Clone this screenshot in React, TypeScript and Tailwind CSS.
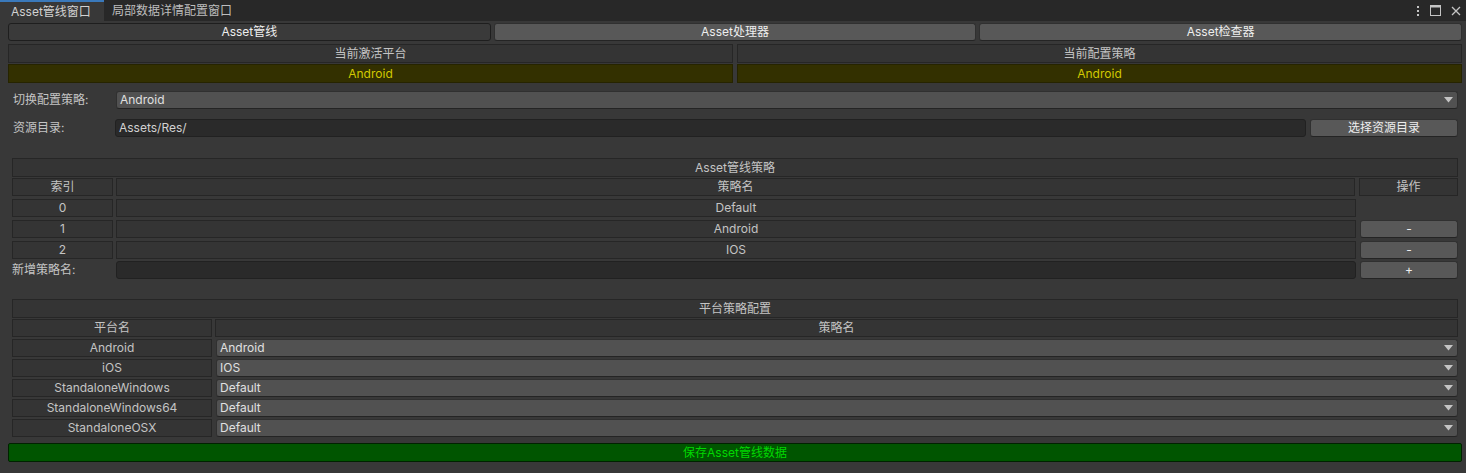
import React from "react";

const FONT = { fontFamily: "Inter, 'Noto Sans CJK SC', sans-serif" };

function Cell({ children, className = "" }: { children?: React.ReactNode; className?: string }) {
  return (
    <div
      className={`flex items-center justify-center h-[18px] bg-[#343434] border border-[#262626] text-[12px] text-[#c4c4c4] ${className}`}
    >
      {children}
    </div>
  );
}

function Button({ children, className = "" }: { children?: React.ReactNode; className?: string }) {
  return (
    <div
      className={`flex items-center justify-center h-[18px] bg-[#585858] border border-[#303030] border-b-[#242424] rounded-[3px] text-[12px] text-[#eeeeee] ${className}`}
    >
      {children}
    </div>
  );
}

function Dropdown({ value, className = "" }: { value: string; className?: string }) {
  return (
    <div
      className={`flex items-center h-[18px] bg-[#515151] border border-[#303030] border-b-[#242424] rounded-[3px] pl-[3px] pr-[4px] text-[12px] text-[#e0e0e0] ${className}`}
    >
      <span className="flex-1">{value}</span>
      <svg width="9" height="6" viewBox="0 0 9 6">
        <path d="M0 0 H9 L4.5 5.5 Z" fill="#c4c4c4" />
      </svg>
    </div>
  );
}

function TextField({ value = "", className = "" }: { value?: string; className?: string }) {
  return (
    <div
      className={`flex items-center h-[18px] bg-[#2a2a2a] border border-[#212121] rounded-[3px] pl-[3px] text-[12px] text-[#d2d2d2] ${className}`}
    >
      {value}
    </div>
  );
}

const strategies = [
  { idx: "0", name: "Default", removable: false },
  { idx: "1", name: "Android", removable: true },
  { idx: "2", name: "IOS", removable: true },
];

const platforms = [
  { name: "Android", strategy: "Android" },
  { name: "iOS", strategy: "IOS" },
  { name: "StandaloneWindows", strategy: "Default" },
  { name: "StandaloneWindows64", strategy: "Default" },
  { name: "StandaloneOSX", strategy: "Default" },
];

export default function App() {
  return (
    <div className="w-[1466px] h-[473px] bg-[#383838] flex flex-col overflow-hidden" style={FONT}>
      {/* Tab bar */}
      <div className="h-[21px] bg-[#282828] flex items-stretch shrink-0">
        <div className="w-[104px] bg-[#383838] border-t-2 border-[#3a79bb] flex items-center pl-[11px] text-[12px] text-[#d2d2d2]">
          Asset管线窗口
        </div>
        <div className="flex items-center pl-[8px] text-[12px] text-[#bdbdbd]">局部数据详情配置窗口</div>
        <div className="flex-1" />
        <div className="flex items-center gap-[10px] pr-[5px]">
          <svg width="4" height="12" viewBox="0 0 4 12">
            <rect x="1" y="1" width="2" height="2" fill="#c4c4c4" />
            <rect x="1" y="5" width="2" height="2" fill="#c4c4c4" />
            <rect x="1" y="9" width="2" height="2" fill="#c4c4c4" />
          </svg>
          <svg width="11" height="11" viewBox="0 0 11 11">
            <rect x="0.5" y="0.5" width="10" height="10" fill="none" stroke="#c4c4c4" />
            <rect x="0.5" y="0.5" width="10" height="2" fill="#c4c4c4" />
          </svg>
          <svg width="10" height="10" viewBox="0 0 10 10">
            <path d="M1 1 L9 9 M9 1 L1 9" stroke="#c4c4c4" strokeWidth="1.3" />
          </svg>
        </div>
      </div>

      {/* Toolbar */}
      <div className="flex gap-[3px] pl-[8px] pr-[4px] mt-[2px]">
        <div className="flex-1 flex items-center justify-center h-[18px] bg-[#3a3a3a] border border-[#1e1e1e] rounded-[3px] text-[12px] text-[#eeeeee]">
          Asset管线
        </div>
        <Button className="flex-1">Asset处理器</Button>
        <Button className="flex-1">Asset检查器</Button>
      </div>

      {/* Active platform / strategy */}
      <div className="flex gap-[4px] pl-[8px] pr-[4px] mt-[3px]">
        <Cell className="flex-1 h-[19px]">当前激活平台</Cell>
        <Cell className="flex-1 h-[19px]">当前配置策略</Cell>
      </div>
      <div className="flex gap-[4px] pl-[8px] pr-[4px] mt-[1px]">
        <div className="flex-1 flex items-center justify-center h-[19px] bg-[#333000] border border-[#262400] text-[12px] text-[#d2c800]">
          Android
        </div>
        <div className="flex-1 flex items-center justify-center h-[19px] bg-[#333000] border border-[#262400] text-[12px] text-[#d2c800]">
          Android
        </div>
      </div>

      {/* Switch strategy */}
      <div className="flex items-center pl-[13px] pr-[8px] mt-[8px]">
        <div className="w-[103px] text-[12px] text-[#c4c4c4]">切换配置策略:</div>
        <Dropdown value="Android" className="flex-1" />
      </div>

      {/* Resource dir */}
      <div className="flex items-center pl-[13px] pr-[8px] mt-[10px]">
        <div className="w-[102px] text-[12px] text-[#c4c4c4]">资源目录:</div>
        <TextField value="Assets/Res/" className="flex-1" />
        <Button className="w-[148px] ml-[4px]">选择资源目录</Button>
      </div>

      {/* Strategy table */}
      <div className="flex flex-col pl-[12px] pr-[8px] mt-[21px]">
        <Cell className="h-[19px]">Asset管线策略</Cell>
        <div className="flex gap-[3px] mt-[1px]">
          <Cell className="w-[101px]">索引</Cell>
          <Cell className="flex-1">策略名</Cell>
          <Cell className="w-[99px] ml-[1px]">操作</Cell>
        </div>
        {strategies.map((s) => (
          <div key={s.idx} className="flex gap-[3px] mt-[2px] h-[19px] items-center">
            <Cell className="w-[101px]">{s.idx}</Cell>
            <Cell className="flex-1">{s.name}</Cell>
            {s.removable ? (
              <Button className="w-[98px] ml-[1px]">-</Button>
            ) : (
              <div className="w-[98px] ml-[1px]" />
            )}
          </div>
        ))}
        <div className="flex items-center mt-[2px]">
          <div className="w-[104px] text-[12px] text-[#c4c4c4]">新增策略名:</div>
          <TextField className="flex-1" />
          <Button className="w-[98px] ml-[4px]">+</Button>
        </div>
      </div>

      {/* Platform table */}
      <div className="flex flex-col pl-[12px] pr-[8px] mt-[20px]">
        <Cell className="h-[19px]">平台策略配置</Cell>
        <div className="flex gap-[3px] mt-[1px]">
          <Cell className="w-[200px]">平台名</Cell>
          <Cell className="flex-1">策略名</Cell>
        </div>
        {platforms.map((p) => (
          <div key={p.name} className="flex gap-[4px] mt-[2px]">
            <Cell className="w-[200px]">{p.name}</Cell>
            <Dropdown value={p.strategy} className="flex-1" />
          </div>
        ))}
      </div>

      {/* Save */}
      <div className="pl-[8px] pr-[4px] mt-[6px]">
        <div className="flex items-center justify-center h-[19px] bg-[#005500] border border-[#002200] rounded-[2px] text-[12px] text-[#00d800]">
          保存Asset管线数据
        </div>
      </div>
    </div>
  );
}
